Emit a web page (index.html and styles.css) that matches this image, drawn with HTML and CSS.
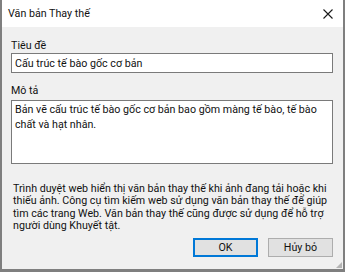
FILE: index.html
```html
<!DOCTYPE html>
<html lang="vi">
<head>
    <meta charset="UTF-8">
    <meta name="viewport" content="width=device-width, initial-scale=1.0">
    <title>Văn bản Thay thế</title>
    <link rel="stylesheet" href="styles.css">
</head>
<body>

    <div class="dialog">
        <div class="title-bar">
            <span class="title">Văn bản Thay thế</span>
            <button class="close-btn" aria-label="Đóng">
                <svg width="10" height="10" viewBox="0 0 10 10">
                    <path d="M0.5 0.5 L9.5 9.5 M9.5 0.5 L0.5 9.5" stroke="#1a1a1a" stroke-width="1.1" fill="none"/>
                </svg>
            </button>
        </div>

        <div class="content">
            <label class="field-label" for="title">Tiêu đề</label>
            <input class="field" type="text" id="title" value="Cấu trúc tế bào gốc cơ bản">

            <label class="field-label label-gap" for="desc">Mô tả</label>
            <textarea class="field area" id="desc">Bản vẽ cấu trúc tế bào gốc cơ bản bao gồm màng tế bào, tế bào chất và hạt nhân.</textarea>

            <p class="help">Trình duyệt web hiển thị văn bản thay thế khi ảnh đang tải hoặc khi thiếu ảnh. Công cụ tìm kiếm web sử dụng văn bản thay thế để giúp tìm các trang Web. Văn bản thay thế cũng được sử dụng để hỗ trợ người dùng Khuyết tật.</p>

            <div class="actions">
                <button class="btn btn-default">OK</button>
                <button class="btn">Hủy bỏ</button>
            </div>
        </div>

        <div class="grip"></div>
    </div>

</body>
</html>
```

FILE: styles.css
```css
/* Page */
body {
    margin: 0;
    padding: 0;
    font-family: Roboto, "Liberation Sans", sans-serif;
    font-size: 10.7px;
    color: #111;
}

/* Dialog window frame */
.dialog {
    position: relative;
    width: 345px;
    height: 272px;
    box-sizing: border-box;
    background-color: #f0f0f0;
    border-left: 2px solid #7f7f7f;
    border-right: 2px solid #7f7f7f;
    border-bottom: 3px solid #7f7f7f;
    display: flex;
    flex-direction: column;
}

.title-bar {
    height: 27px;
    background-color: #fff;
    display: flex;
    align-items: center;
    justify-content: space-between;
    padding: 0 8px 0 6px;
    flex-shrink: 0;
}

.close-btn {
    border: none;
    background: none;
    padding: 0;
    width: 14px;
    height: 14px;
    display: flex;
    align-items: center;
    justify-content: center;
}

/* Form */
.content {
    padding: 12px 10px 0 9px;
    display: flex;
    flex-direction: column;
}

.field-label {
    display: block;
    line-height: 14px;
}

.label-gap {
    margin-top: 11px;
}

.field {
    box-sizing: border-box;
    width: 100%;
    margin: 0;
    height: 20px;
    border: 1px solid #7a7a7a;
    background-color: #fff;
    font-family: inherit;
    font-size: 10.7px;
    color: #111;
    padding: 0 3px;
    outline: none;
}

.area {
    height: 64px;
    margin-top: 2px;
    padding: 2px 3px;
    line-height: 14.5px;
    resize: none;
    overflow: hidden;
}

.help {
    margin: 19px 0 0;
    padding: 0 2px;
    line-height: 12.4px;
}

.actions {
    display: flex;
    justify-content: flex-end;
    gap: 10px;
    margin-top: 5px;
}

.btn {
    box-sizing: border-box;
    width: 65px;
    height: 19px;
    border: 1px solid #adadad;
    background-color: #e1e1e1;
    font-family: inherit;
    font-size: 10.7px;
    color: #111;
    padding: 0;
}

.btn-default {
    border: 2px solid #0078d7;
}

/* Resize grip in the corner */
.grip {
    position: absolute;
    right: 1px;
    bottom: 1px;
    width: 6px;
    height: 6px;
    background-image: radial-gradient(#b4b4b4 0.8px, transparent 1px);
    background-size: 2px 2px;
    clip-path: polygon(100% 0, 100% 100%, 0 100%);
}
```
